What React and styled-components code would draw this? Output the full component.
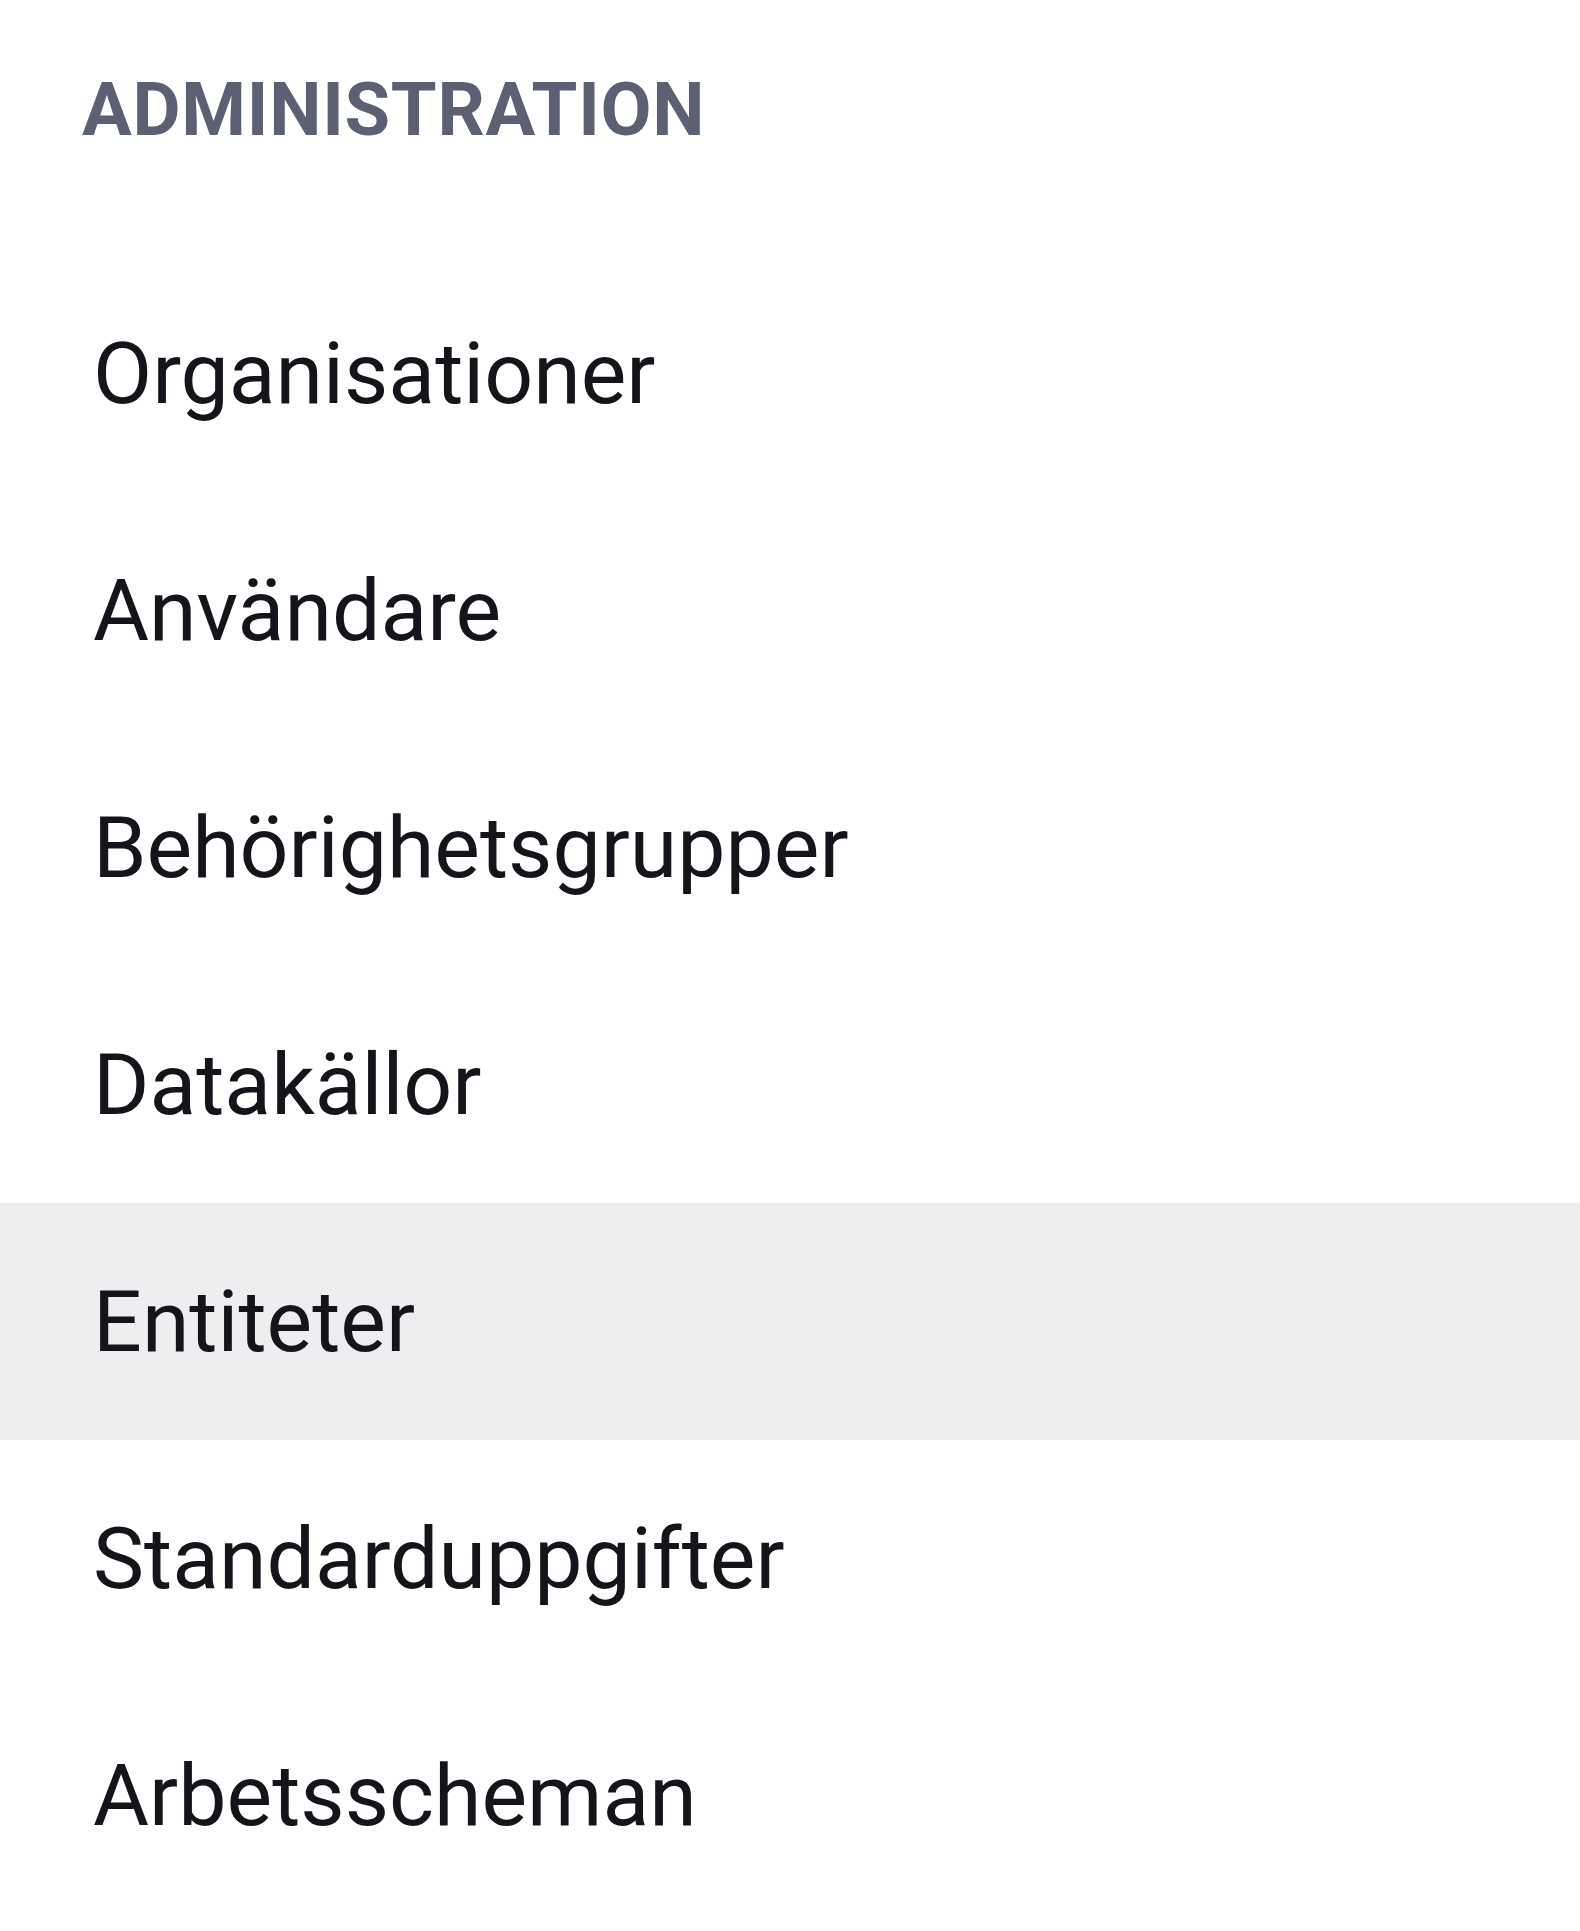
import React from 'react';
import styled, { createGlobalStyle } from 'styled-components';

const GlobalStyle = createGlobalStyle`
  html, body {
    margin: 0;
    padding: 0;
    background: #ffffff;
  }

  body {
    font-family: Roboto, "Liberation Sans", sans-serif;
  }
`;

const Nav = styled.nav`
  width: 1580px;
  display: flex;
  flex-direction: column;
  background: #ffffff;
`;

const SectionTitle = styled.h2`
  margin: 0;
  padding: 65px 0 0 82px;
  font-size: 74px;
  line-height: 89px;
  font-weight: 700;
  letter-spacing: 0.01em;
  text-transform: uppercase;
  color: #5c6073;
`;

const List = styled.ul`
  list-style: none;
  margin: 101px 0 0;
  padding: 0;
  display: flex;
  flex-direction: column;
`;

const Item = styled.li`
  height: 237px;
  display: flex;
  align-items: center;
  padding-left: 93px;
  font-size: 86px;
  line-height: 1.2;
  font-weight: 400;
  color: #14141a;
  background: ${({ active }) => (active ? '#eeeef0' : 'transparent')};
  cursor: pointer;
`;

const items = [
  'Organisationer',
  'Användare',
  'Behörighetsgrupper',
  'Datakällor',
  'Entiteter',
  'Standarduppgifter',
  'Arbetsscheman',
];

const App = () => {
  const current = 'Entiteter';

  return (
    <>
      <GlobalStyle />
      <Nav>
        <SectionTitle>Administration</SectionTitle>
        <List>
          {items.map((label) => (
            <Item key={label} active={label === current}>
              {label}
            </Item>
          ))}
        </List>
      </Nav>
    </>
  );
};

export default App;
